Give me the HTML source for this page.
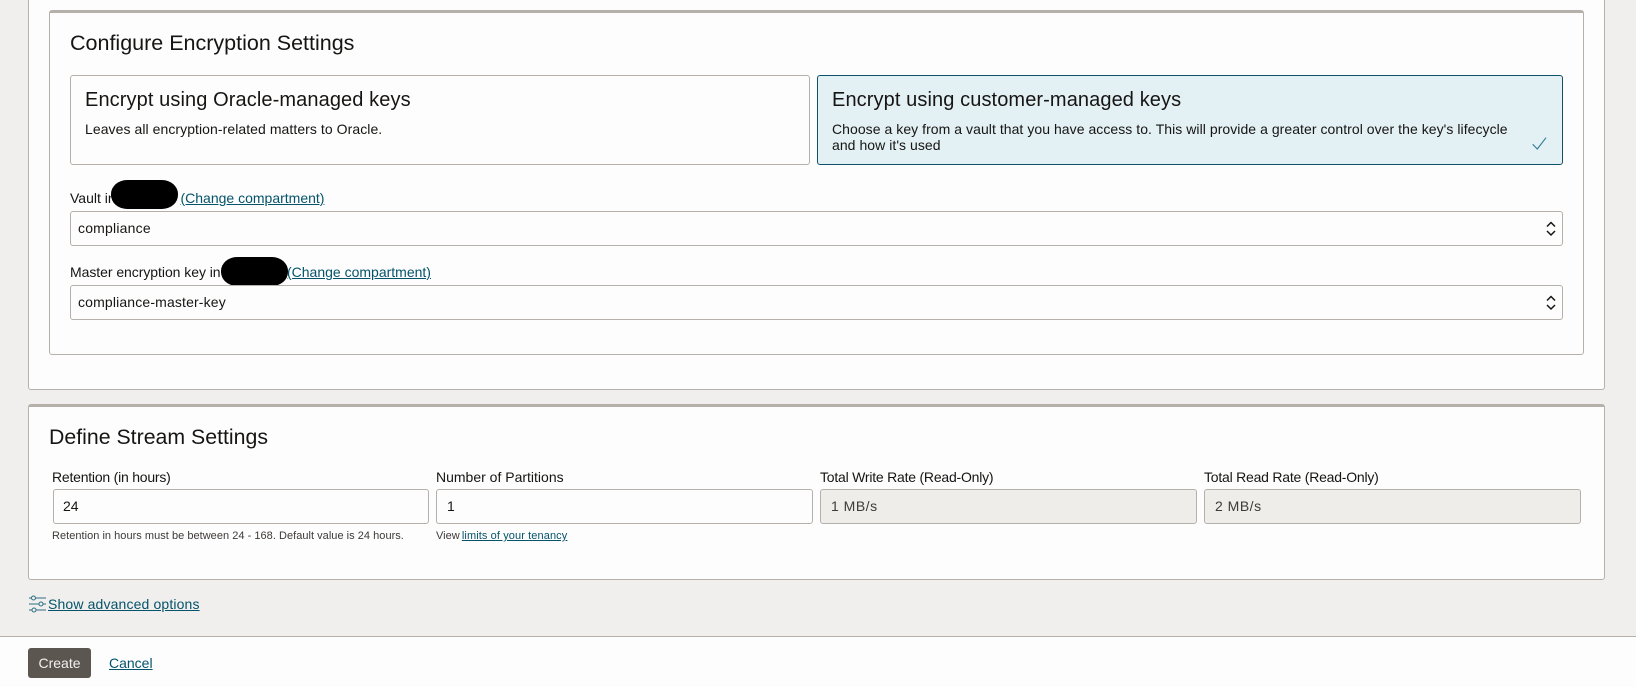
<!DOCTYPE html>
<html><head><meta charset="utf-8">
<style>
html,body{margin:0;padding:0;width:1636px;height:687px;overflow:hidden;background:#f1efed;font-family:"Liberation Sans",sans-serif;color:#161513}
.a{position:absolute;white-space:nowrap}
.box{position:absolute;box-sizing:border-box;background:#fdfdfd;border:1px solid #b5b0aa;border-radius:3px}
.bar{border-top:3px solid #b5b0aa}
.t{position:absolute;white-space:nowrap;font-size:14px;line-height:16px}
a{color:#04536a;text-decoration:underline}
.h{font-size:21.500px;line-height:26px}
.ct{font-size:20px;line-height:24px;letter-spacing:.1px}
.d{letter-spacing:.05px}
.help{font-size:11px;line-height:14px;color:#3d3a37;letter-spacing:.03px}
.ro{background:#efedea}
.blob{position:absolute;background:#000;border-radius:16px/14px}
.lbl{letter-spacing:-.22px}
.v{color:#3d3a37;letter-spacing:.5px}
</style></head><body>
<div class="a" style="left:0;top:0;width:1636px;height:636px;background:#f1efed"></div>
<div class="box" style="left:28px;top:-10px;width:1577px;height:400px"></div>
<div class="box bar" style="left:49px;top:10px;width:1535px;height:345px"></div>
<div class="t h" style="left:70px;top:30px">Configure Encryption Settings</div>

<div class="box" style="left:70px;top:75px;width:740px;height:90px"></div>
<div class="t ct" style="left:85px;top:88px">Encrypt using Oracle-managed keys</div>
<div class="t d" style="left:85px;top:121px;letter-spacing:.065px">Leaves all encryption-related matters to Oracle.</div>

<div class="box" style="left:817px;top:75px;width:746px;height:90px;background:#e3f0f4;border-color:#0f5168"></div>
<div class="t ct" style="left:832px;top:88px">Encrypt using customer-managed keys</div>
<div class="t d" style="left:832px;top:121px">Choose a key from a vault that you have access to. This will provide a greater control over the key's lifecycle</div>
<div class="t d" style="left:832px;top:137px">and how it's used</div>
<svg class="a" style="left:1530px;top:125px" width="30" height="30" viewBox="0 0 30 30"><path d="M2.700 19.300L7.300 24L16 12.700" fill="none" stroke="#2f7c91" stroke-width="1.100"/></svg>

<div class="t" style="left:70px;top:190px">Vault in</div>
<div class="blob" style="left:111px;top:180px;width:67px;height:29px"></div>
<a class="t" style="left:180.500px;top:190px">(Change compartment)</a>
<div class="box" style="left:70px;top:211px;width:1493px;height:35px"></div>
<div class="t" style="left:78px;top:220px;letter-spacing:.2px">compliance</div>
<svg class="a" style="left:1544px;top:220px" width="14" height="18" viewBox="0 0 14 18"><path d="M3 6.500L7 2.500L11 6.500M3 11L7 15L11 11" fill="none" stroke="#161513" stroke-width="1.500"/></svg>

<div class="t" style="left:70px;top:264px;letter-spacing:-.05px">Master encryption key in</div>
<div class="blob" style="left:221px;top:257px;width:67px;height:29px"></div>
<a class="t" style="left:287px;top:264px">(Change compartment)</a>
<div class="box" style="left:70px;top:285px;width:1493px;height:35px"></div>
<div class="t" style="left:78px;top:294px;letter-spacing:.15px">compliance-master-key</div>
<svg class="a" style="left:1544px;top:294px" width="14" height="18" viewBox="0 0 14 18"><path d="M3 6.500L7 2.500L11 6.500M3 11L7 15L11 11" fill="none" stroke="#161513" stroke-width="1.500"/></svg>

<div class="box bar" style="left:28px;top:404px;width:1577px;height:176px"></div>
<div class="t h" style="left:49px;top:424px;font-size:21.300px">Define Stream Settings</div>

<div class="t lbl" style="left:52px;top:469px">Retention (in hours)</div>
<div class="box" style="left:53px;top:489px;width:376px;height:35px"></div>
<div class="t" style="left:63px;top:498px">24</div>
<div class="t help" style="left:52px;top:529px">Retention in hours must be between 24 - 168. Default value is 24 hours.</div>

<div class="t" style="left:436px;top:469px">Number of Partitions</div>
<div class="box" style="left:436px;top:489px;width:377px;height:35px"></div>
<div class="t" style="left:447px;top:498px">1</div>
<div class="t help" style="left:436px;top:529px">View <a style="letter-spacing:.1px;margin-left:-1px">limits of your tenancy</a></div>

<div class="t lbl" style="left:820px;top:469px">Total Write Rate (Read-Only)</div>
<div class="box ro" style="left:820px;top:489px;width:377px;height:35px"></div>
<div class="t v" style="left:831px;top:498px">1 MB/s</div>

<div class="t lbl" style="left:1204px;top:469px">Total Read Rate (Read-Only)</div>
<div class="box ro" style="left:1204px;top:489px;width:377px;height:35px"></div>
<div class="t v" style="left:1215px;top:498px">2 MB/s</div>

<svg class="a" style="left:28px;top:594px" width="20" height="20" viewBox="0 0 20 20" fill="none" stroke="#2a6f84" stroke-width="1"><circle cx="5.500" cy="4" r="2"/><circle cx="13" cy="10" r="2"/><circle cx="6" cy="16" r="2"/><path d="M1 4H3.500M8 4H18M1 10H11M15 10H18M1 16H4M8 16H18"/></svg>
<a class="t" style="left:48px;top:596px;letter-spacing:.14px">Show advanced options</a>

<div class="a" style="left:0;top:636px;width:1636px;height:51px;background:#fdfdfd;border-top:1px solid #b5b0aa;box-sizing:border-box"></div>
<div class="a" style="left:28px;top:648px;width:63px;height:30px;background:#5c5651;border-radius:3px;color:#f1f0ee;font-size:14px;line-height:30px;text-align:center">Create</div>
<a class="t" style="left:109px;top:655px">Cancel</a>
</body></html>
